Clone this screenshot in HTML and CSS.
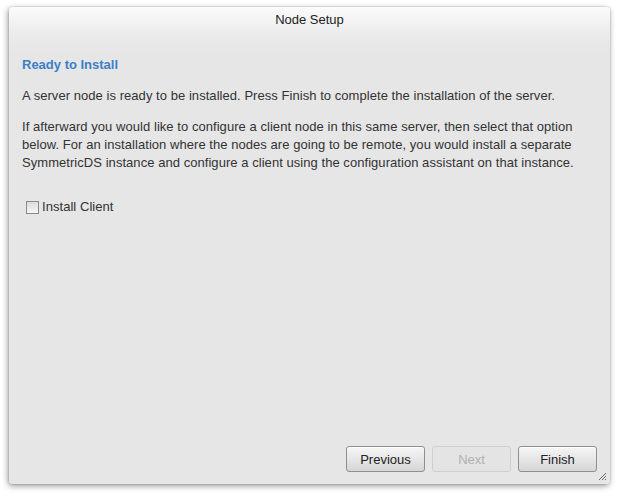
FILE: index.html
```html
<!DOCTYPE html>
<html>
<head>
<meta charset="utf-8">
<link rel="stylesheet" href="styles.css">
</head>
<body>
<div class="window">
  <div class="titlebar">Node Setup</div>
  <div class="content">
    <h2 class="heading">Ready to Install</h2>
    <p class="para">A server node is ready to be installed. Press Finish to complete the installation of the server.</p>
    <p class="para">If afterward you would like to configure a client node in this same server, then select that option below. For an installation where the nodes are going to be remote, you would install a separate SymmetricDS instance and configure a client using the configuration assistant on that instance.</p>
    <label class="check"><span class="box"></span>Install Client</label>
  </div>
  <div class="footer">
    <button class="btn">Previous</button>
    <button class="btn disabled">Next</button>
    <button class="btn">Finish</button>
  </div>
  <svg class="grip" width="9" height="9" viewBox="0 0 9 9">
    <path d="M8 1 L1 8 M8 4 L4 8 M8 7 L7 8" stroke="#666" stroke-width="1" fill="none"/>
  </svg>
</div>
</body>
</html>
```

FILE: styles.css
```css
html, body {
  margin: 0;
  padding: 0;
  background: #ffffff;
}
body {
  font-family: "Liberation Sans", Arial, sans-serif;
  font-size: 13px;
  color: #333;
  padding: 7px 10px 13px 9px;
}
.window {
  position: relative;
  width: 601px;
  height: 477px;
  box-sizing: border-box;
  border-radius: 4px;
  background: linear-gradient(#fbfbfb 0px, #ececec 26px, #e6e6e6 45px, #e6e6e6 100%);
  box-shadow: -1px 2px 6px rgba(0,0,0,0.4), 0 0 2px rgba(0,0,0,0.25);
  display: flex;
  flex-direction: column;
}
.titlebar {
  height: 25px;
  line-height: 25px;
  text-align: center;
  font-size: 13px;
  color: #222;
}
.content {
  flex: 1;
  padding: 25px 13px 0 13px;
  letter-spacing: 0.05px;
}
.heading {
  margin: 0;
  font-size: 13px;
  font-weight: bold;
  color: #3b7fc6;
  line-height: 16px;
  letter-spacing: 0;
}
.para {
  margin: 14px 0 0 0;
  line-height: 18px;
}
.para + .para {
  margin-top: 13px;
}
.check {
  display: flex;
  align-items: center;
  margin: 27px 0 0 4px;
  line-height: 16px;
  color: #333;
}
.box {
  width: 11px;
  height: 11px;
  border: 1px solid #8a8a8a;
  background: linear-gradient(#dcdcdc, #f6f6f6);
  margin-right: 3px;
}
.footer {
  display: flex;
  justify-content: flex-end;
  gap: 7px;
  padding: 0 13px 12px 0;
}
.btn {
  width: 79px;
  height: 26px;
  border: 1px solid #8f8f8f;
  border-radius: 3px;
  background: linear-gradient(#f6f6f6, #d6d6d6);
  font-family: "Liberation Sans", Arial, sans-serif;
  font-size: 13px;
  color: #222;
  padding: 0;
  box-shadow: inset 0 1px 0 #fff;
}
.btn.disabled {
  border-color: #cfcfcf;
  background: #e4e4e4;
  color: #b0b0b0;
  box-shadow: none;
}
.grip {
  position: absolute;
  right: 3px;
  bottom: 3px;
}
```
